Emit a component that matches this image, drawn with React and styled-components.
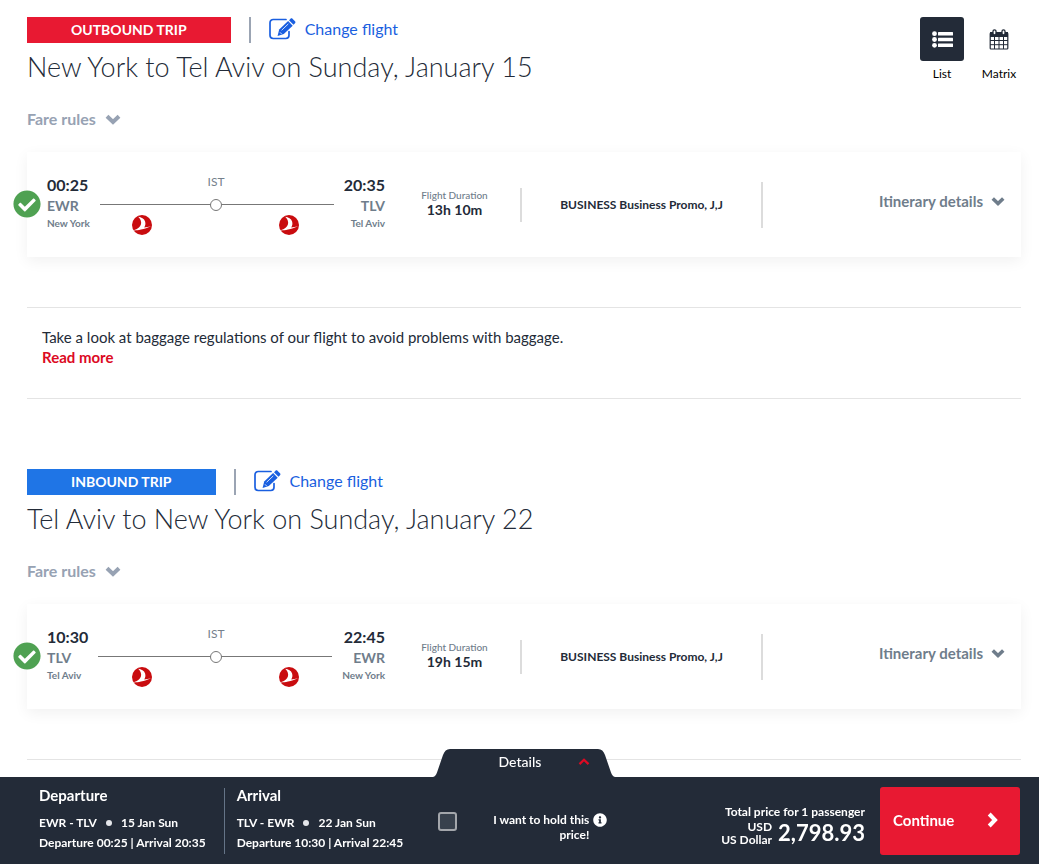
import { useState } from 'react'
import styled, { createGlobalStyle } from 'styled-components'
import { FaCheckCircle, FaInfoCircle } from 'react-icons/fa'

const trips = [
  {
    type: 'OUTBOUND TRIP',
    color: '#e81932',
    title: 'New York to Tel Aviv on Sunday, January 15',
    from: { time: '00:25', code: 'EWR', city: 'New York' },
    to: { time: '20:35', code: 'TLV', city: 'Tel Aviv' },
    stop: 'IST',
    duration: '13h 10m',
    fare: 'BUSINESS Business Promo, J,J',
  },
  {
    type: 'INBOUND TRIP',
    color: '#1f75e6',
    title: 'Tel Aviv to New York on Sunday, January 22',
    from: { time: '10:30', code: 'TLV', city: 'Tel Aviv' },
    to: { time: '22:45', code: 'EWR', city: 'New York' },
    stop: 'IST',
    duration: '19h 15m',
    fare: 'BUSINESS Business Promo, J,J',
  },
]

const Chevron = ({ size = 16, rotate = 0, width = 4 }) => (
  <svg width={size} height={size} viewBox="0 0 16 16" aria-hidden="true">
    <path
      d="M2 5.2l6 5.8 6-5.8"
      fill="none"
      stroke="currentColor"
      strokeWidth={width}
      transform={`rotate(${rotate} 8 8)`}
    />
  </svg>
)

const EditIcon = () => (
  <svg width="27" height="22" viewBox="0 0 27 22" aria-hidden="true">
    <path d="M17 1.500H4.200A3.200 3.200 0 0 0 1 4.700v12.600a3.200 3.200 0 0 0 3.200 3.200h12.600a3.200 3.200 0 0 0 3.200-3.200v-3.800" fill="none" stroke="currentColor" strokeWidth="1.700" strokeLinecap="round" />
    <path d="M8.600 17.900l1.600-6.500 8.900-8.300 4.600 4.700-8.900 8.300z" fill="currentColor" />
    <path d="M20 2.300l1.500-1.500c.6-.6 1.400-.6 2 0l2.500 2.500c.6.6.6 1.400 0 2l-1.500 1.500z" fill="currentColor" />
    <path d="M12.600 12.300l6.700-6.400M11 14.300l1.600 1.700" stroke="#fff" strokeWidth="0.8" />
  </svg>
)

const ListIcon = () => (
  <svg width="21" height="17" viewBox="0 0 21 17" aria-hidden="true">
    <g fill="#fff">
      <circle cx="2.5" cy="2.7" r="2.4" />
      <circle cx="2.5" cy="8.5" r="2.4" />
      <circle cx="2.5" cy="14.3" r="2.4" />
      <rect x="6" y="1" width="15" height="3.4" rx="0.5" />
      <rect x="6" y="6.8" width="15" height="3.4" rx="0.5" />
      <rect x="6" y="12.6" width="15" height="3.4" rx="0.5" />
    </g>
  </svg>
)

const MatrixIcon = () => (
  <svg width="20" height="21" viewBox="0 0 20 21" aria-hidden="true">
    <path d="M1 3h18v5H1z" fill="#232b38" />
    <rect x="1.2" y="4" width="17.6" height="16" rx="0.8" fill="none" stroke="#232b38" strokeWidth="1.2" />
    <path d="M1 11.5h18M1 15.7h18M5.5 8v12M10 8v12M14.5 8v12" stroke="#232b38" strokeWidth="1" />
    <g fill="#fff" stroke="#232b38" strokeWidth="1.3">
      <rect x="4" y="0.8" width="3" height="5" rx="1.5" />
      <rect x="13" y="0.8" width="3" height="5" rx="1.5" />
    </g>
  </svg>
)

const AirlineLogo = () => (
  <svg width="20" height="20" viewBox="0 0 20 20" role="img" aria-label="Turkish Airlines">
    <circle cx="10" cy="10" r="10" fill="#c90c0f" />
    <path
      d="M6 1.8c3.400.3 6.200 1.900 7.100 4.700.7 2.300.2 4.200-.8 5.900 2.100-.3 4.300-.6 6.700-1.100-3.300 1.600-6.600 2.500-10 3.300-3 .7-5.400 1-7.600.9 2.200-.8 3.900-1.600 5.200-2.700 2.300-2 3.100-4.300 2.200-7.100-.5-1.500-1.500-2.900-2.800-3.900z"
      fill="#fff"
    />
  </svg>
)

const TripSection = ({ trip }) => (
  <>
    <FareRules type="button">
      Fare rules <Chevron />
    </FareRules>
    <Card>
      <Selected>
        <FaCheckCircle size={28} />
      </Selected>
      <Route>
        <Ends>
          <Endpoint>
            <Time>{trip.from.time}</Time>
            <Code>{trip.from.code}</Code>
            <City>{trip.from.city}</City>
          </Endpoint>
          <Line />
          <Endpoint $right>
            <Time>{trip.to.time}</Time>
            <Code>{trip.to.code}</Code>
            <City>{trip.to.city}</City>
          </Endpoint>
        </Ends>
        <Stops>
          <StopCode>{trip.stop}</StopCode>
          <StopDot />
          <Airlines>
            <AirlineLogo />
            <AirlineLogo />
          </Airlines>
        </Stops>
      </Route>
      <Duration>
        <DurationLabel>Flight Duration</DurationLabel>
        <DurationValue>{trip.duration}</DurationValue>
      </Duration>
      <Fare>{trip.fare}</Fare>
      <Itinerary type="button">
        Itinerary details <Chevron size={14} />
      </Itinerary>
    </Card>
  </>
)

const TripHeading = ({ trip }) => (
  <div>
    <TagRow>
      <Tag $color={trip.color}>{trip.type}</Tag>
      <TagDivider />
      <ChangeLink href="#change">
        <EditIcon />
        Change flight
      </ChangeLink>
    </TagRow>
    <Title>{trip.title}</Title>
  </div>
)

const App = () => {
  const [view, setView] = useState('list')
  const [hold, setHold] = useState(false)
  const [outbound, inbound] = trips

  return (
    <>
      <GlobalStyle />
      <Page>
        <Header>
          <TripHeading trip={outbound} />
          <Views>
            <ViewButton type="button" onClick={() => setView('list')}>
              <ViewIcon $active={view === 'list'}>
                <ListIcon />
              </ViewIcon>
              List
            </ViewButton>
            <ViewButton type="button" onClick={() => setView('matrix')}>
              <ViewIcon>
                <MatrixIcon />
              </ViewIcon>
              Matrix
            </ViewButton>
          </Views>
        </Header>
        <TripSection trip={outbound} />

        <Notice>
          <p>Take a look at baggage regulations of our flight to avoid problems with baggage.</p>
          <ReadMore href="#baggage">Read more</ReadMore>
        </Notice>

        <Header>
          <TripHeading trip={inbound} />
        </Header>
        <TripSection trip={inbound} />
        <Rule />
      </Page>

      <Footer>
        <DetailsTab type="button">
          <TabShape viewBox="0 0 182 28" aria-hidden="true">
            <path d="M0 28c2-.5 3-2 4-4.500l6-17.500c1.500-4 3.500-6 7-6h148c3.500 0 5.500 2 7 6l6 17.500c1 2.500 2 4 4 4.500z" fill="#232b38" />
          </TabShape>
          <TabLabel>
            Details
            <Chevron size={12} rotate={180} width={3} />
          </TabLabel>
        </DetailsTab>
        <Bar>
          <Legs>
            <Leg>
              <LegTitle>Departure</LegTitle>
              <LegText>
                EWR - TLV <Dot /> 15 Jan Sun
              </LegText>
              <LegText>Departure 00:25 | Arrival 20:35</LegText>
            </Leg>
            <Leg>
              <LegTitle>Arrival</LegTitle>
              <LegText>
                TLV - EWR <Dot /> 22 Jan Sun
              </LegText>
              <LegText>Departure 10:30 | Arrival 22:45</LegText>
            </Leg>
          </Legs>
          <Hold>
            <Checkbox id="hold" type="checkbox" checked={hold} onChange={(e) => setHold(e.target.checked)} />
            <HoldLabel htmlFor="hold">I want to hold this price!</HoldLabel>
            <InfoIcon>
              <FaInfoCircle size={14} />
            </InfoIcon>
          </Hold>
          <Total>
            <div>Total price for 1 passenger</div>
            <Amount>
              <Currency>
                USD
                <br />
                US Dollar
              </Currency>
              <Price>2,798.93</Price>
            </Amount>
          </Total>
          <Continue type="button">
            Continue
            <Chevron size={16} rotate={-90} />
          </Continue>
        </Bar>
      </Footer>
    </>
  )
}

export default App

const GlobalStyle = createGlobalStyle`
  * {
    box-sizing: border-box;
  }

  body {
    margin: 0;
    background: #fff;
    color: #232b38;
    font-family: Lato, "Open Sans", sans-serif;
    font-size: 14px;
    line-height: 20px;
  }

  button {
    border: 0;
    padding: 0;
    background: none;
    font: inherit;
    cursor: pointer;
  }

  a {
    text-decoration: none;
  }

  p, h2, h3 {
    margin: 0;
  }

  svg {
    display: block;
    flex: none;
  }
`

const Page = styled.main`
  padding: 17px 18px 100px 27px;
`

const Header = styled.header`
  display: flex;
  justify-content: space-between;
  align-items: flex-start;
`

const TagRow = styled.div`
  display: flex;
  align-items: center;
  gap: 18px;
`

const Tag = styled.span`
  padding: 0 44px;
  background: ${(props) => props.$color};
  color: #fff;
  font-weight: 700;
  line-height: 26px;
`

const TagDivider = styled.span`
  width: 2px;
  height: 26px;
  background: #9ba4b3;
`

const ChangeLink = styled.a`
  display: flex;
  align-items: center;
  gap: 9px;
  padding-bottom: 2px;
  color: #1a5fe0;
  font-size: 16px;
  line-height: 24px;
`

const Title = styled.h2`
  margin-top: 6px;
  font-size: 27px;
  font-weight: 300;
  line-height: 36px;
`

const Views = styled.div`
  display: flex;
  gap: 13px;
`

const ViewButton = styled.button`
  display: flex;
  flex-direction: column;
  align-items: center;
  gap: 3px;
  width: 44px;
  color: #000;
  font-size: 12px;
`

const ViewIcon = styled.span`
  display: flex;
  align-items: center;
  justify-content: center;
  width: 44px;
  height: 44px;
  border-radius: 3px;
  background: ${(props) => (props.$active ? '#232b38' : 'transparent')};
`

const FareRules = styled.button`
  display: flex;
  align-items: center;
  gap: 9px;
  margin: 24px 0 23px;
  color: #97a2b3;
  font-size: 16px;
  font-weight: 700;
`

const Card = styled.section`
  position: relative;
  display: grid;
  grid-template-columns: 358fr 137fr 241fr 258fr;
  align-items: center;
  height: 105px;
  background: #fff;
  box-shadow: 0 4px 14px rgba(0, 0, 0, 0.06);
`

const Selected = styled.span`
  position: absolute;
  top: 38px;
  left: -14px;
  border-radius: 50%;
  background: #fff;
  color: #4fa152;
`

const Route = styled.div`
  display: grid;
  padding-left: 20px;
`

const Ends = styled.div`
  grid-area: 1 / 1;
  display: flex;
  align-items: center;
  gap: 10px;
`

const Endpoint = styled.div`
  display: flex;
  flex-direction: column;
  padding-bottom: 6px;
  text-align: ${(props) => (props.$right ? 'right' : 'left')};
`

const Time = styled.span`
  font-size: 16px;
  font-weight: 700;
  line-height: 22px;
`

const Code = styled.span`
  color: #6f7d8b;
  font-weight: 700;
  line-height: 20px;
`

const City = styled.span`
  color: #6f7d8b;
  font-size: 10px;
  font-weight: 700;
  line-height: 14px;
`

const Line = styled.span`
  flex: 1;
  height: 1px;
  background: #777;
`

const Stops = styled.div`
  grid-area: 1 / 1;
  display: flex;
  flex-direction: column;
  align-items: center;
`

const StopCode = styled.span`
  color: #75808c;
  font-size: 12px;
  line-height: 16px;
`

const StopDot = styled.span`
  width: 12px;
  height: 12px;
  margin: 9px 0 4px;
  border: 1px solid #777;
  border-radius: 50%;
  background: #fff;
`

const Airlines = styled.div`
  display: flex;
  justify-content: space-between;
  width: 50%;
  padding-right: 2px;
`

const Duration = styled.div`
  padding: 0 0 4px 4px;
  border-right: 2px solid #dcdcdc;
  text-align: center;
`

const DurationLabel = styled.div`
  color: #6f7d8b;
  font-size: 10px;
  font-weight: 500;
  line-height: 14px;
`

const DurationValue = styled.div`
  font-weight: 700;
  line-height: 16px;
`

const Fare = styled.div`
  border-right: 2px solid #dcdcdc;
  font-size: 12px;
  font-weight: 700;
  line-height: 46px;
  text-align: center;
`

const Itinerary = styled.button`
  display: flex;
  align-items: center;
  justify-content: flex-end;
  gap: 8px;
  padding: 0 16px 8px 0;
  color: #6f7d8b;
  font-size: 15px;
  font-weight: 700;
`

const Notice = styled.section`
  margin: 50px 0 70px;
  padding: 19px 15px 31px;
  border-top: 1px solid #e4e4e4;
  border-bottom: 1px solid #e4e4e4;
  font-size: 15px;
`

const ReadMore = styled.a`
  color: #dc0a23;
  font-weight: 700;
`

const Rule = styled.hr`
  margin: 50px 0 0;
  border: 0;
  border-top: 1px solid #e4e4e4;
`

const Footer = styled.footer`
  position: fixed;
  right: 0;
  bottom: 0;
  left: 0;
  color: #fff;
`

const DetailsTab = styled.button`
  display: grid;
  width: 182px;
  margin-left: calc(50% - 87px);
  color: #fff;
  font-weight: 500;
`

const TabShape = styled.svg`
  grid-area: 1 / 1;
  width: 100%;
`

const TabLabel = styled.span`
  grid-area: 1 / 1;
  display: flex;
  align-items: center;
  justify-content: space-between;
  padding: 0 25px 2px 66px;

  svg {
    color: #dc0a23;
  }
`

const Bar = styled.div`
  display: flex;
  align-items: center;
  padding: 10px 19px 9px 39px;
  background: #232b38;
`

const Legs = styled.div`
  display: flex;
`

const Leg = styled.div`
  padding-bottom: 1px;

  &:first-child {
    margin-right: 12px;
    padding-right: 18px;
    border-right: 1px solid #657487;
  }
`

const LegTitle = styled.h3`
  margin-bottom: 11px;
  font-size: 15px;
  font-weight: 700;
  line-height: 14px;
`

const LegText = styled.div`
  display: flex;
  align-items: center;
  gap: 9px;
  font-size: 12px;
  font-weight: 700;
`

const Dot = styled.span`
  width: 6px;
  height: 6px;
  border-radius: 50%;
  background: #e4e6ea;
`

const Hold = styled.div`
  display: flex;
  align-items: center;
  margin: 0 auto 0 35px;
`

const Checkbox = styled.input`
  appearance: none;
  width: 19px;
  height: 19px;
  margin: 0;
  border: 2px solid #a3a6ab;
  border-radius: 3px;
  background: #38414d;

  &:checked {
    background: #e81932;
  }
`

const HoldLabel = styled.label`
  width: 113px;
  margin: 12px 0 0 19px;
  font-size: 12px;
  font-weight: 700;
  line-height: 15px;
  text-align: right;
`

const InfoIcon = styled.span`
  margin: 0 0 2px 4px;
`

const Total = styled.div`
  padding-top: 9px;
  margin-right: 15px;
  font-size: 12px;
  font-weight: 700;
  line-height: 14px;
  text-align: right;
`

const Amount = styled.div`
  display: flex;
  align-items: center;
  justify-content: flex-end;
  gap: 6px;
`

const Currency = styled.div`
  font-size: 12px;
  line-height: 13px;
`

const Price = styled.div`
  font-size: 22px;
  line-height: 28px;
`

const Continue = styled.button`
  display: flex;
  align-items: center;
  justify-content: space-between;
  width: 140px;
  height: 68px;
  padding: 0 20px 2px 13px;
  border-radius: 3px;
  background: #e81932;
  color: #fff;
  font-size: 15px;
  font-weight: 700;
`
